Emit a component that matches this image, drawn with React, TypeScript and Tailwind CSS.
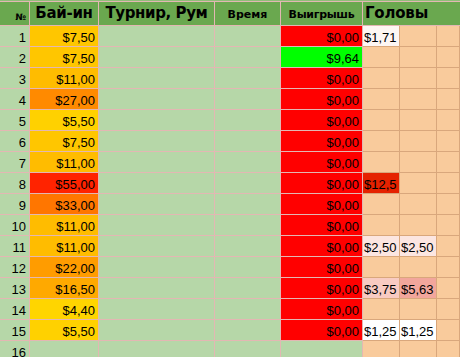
import React from "react";

type G = { t: string; c: string };
type Row = { n: number; buy?: string; bc?: string; win?: string; wc?: string; g?: (G | null)[] };

const rows: Row[] = [
  { n: 1, buy: "$7,50", bc: "bg-[#ffc600]", win: "$0,00", wc: "bg-[#ff0000]", g: [{ t: "$1,71", c: "bg-[#fdf6f3]" }] },
  { n: 2, buy: "$7,50", bc: "bg-[#ffc600]", win: "$9,64", wc: "bg-[#00ff00]" },
  { n: 3, buy: "$11,00", bc: "bg-[#ffbc00]", win: "$0,00", wc: "bg-[#ff0000]" },
  { n: 4, buy: "$27,00", bc: "bg-[#ff8a00]", win: "$0,00", wc: "bg-[#ff0000]" },
  { n: 5, buy: "$5,50", bc: "bg-[#ffd100]", win: "$0,00", wc: "bg-[#ff0000]" },
  { n: 6, buy: "$7,50", bc: "bg-[#ffc600]", win: "$0,00", wc: "bg-[#ff0000]" },
  { n: 7, buy: "$11,00", bc: "bg-[#ffbc00]", win: "$0,00", wc: "bg-[#ff0000]" },
  { n: 8, buy: "$55,00", bc: "bg-[#ff2300]", win: "$0,00", wc: "bg-[#ff0000]", g: [{ t: "$12,5", c: "bg-[#e52200]" }] },
  { n: 9, buy: "$33,00", bc: "bg-[#ff7600]", win: "$0,00", wc: "bg-[#ff0000]" },
  { n: 10, buy: "$11,00", bc: "bg-[#ffbc00]", win: "$0,00", wc: "bg-[#ff0000]" },
  { n: 11, buy: "$11,00", bc: "bg-[#ffbc00]", win: "$0,00", wc: "bg-[#ff0000]", g: [{ t: "$2,50", c: "bg-[#fce6e1]" }, { t: "$2,50", c: "bg-[#fce6e1]" }] },
  { n: 12, buy: "$22,00", bc: "bg-[#ff9c00]", win: "$0,00", wc: "bg-[#ff0000]" },
  { n: 13, buy: "$16,50", bc: "bg-[#ffa900]", win: "$0,00", wc: "bg-[#ff0000]", g: [{ t: "$3,75", c: "bg-[#f8cbc2]" }, { t: "$5,63", c: "bg-[#f2a69c]" }] },
  { n: 14, buy: "$4,40", bc: "bg-[#ffd500]", win: "$0,00", wc: "bg-[#ff0000]" },
  { n: 15, buy: "$5,50", bc: "bg-[#ffd100]", win: "$0,00", wc: "bg-[#ff0000]", g: [{ t: "$1,25", c: "bg-white" }, { t: "$1,25", c: "bg-white" }] },
  { n: 16 },
];

const pinkB = "border-r border-b border-[#e3b7b3]";
const tanB = "border-r border-b border-[#d9a77c]";
const num = "h-[21px] pt-[3px] leading-[17px] text-[13px] text-black whitespace-nowrap overflow-hidden";
const head = "font-['DejaVu_Sans',sans-serif] font-bold text-black";

export default function App() {
  return (
    <div className="w-[460px] h-[357px] overflow-hidden bg-[#b6d7a8] font-['Liberation_Sans',Arial,sans-serif]">
      <div className="h-[2px] bg-[#8fbf78] border-b border-[#e3b7b3]" />
      <div className="grid grid-cols-[30px_69px_116px_66px_82px_37px_37px_1fr]">
        {/* header */}
        <div className={`h-[24px] bg-[#6aa84f] ${pinkB} flex items-end justify-end pr-[3px] pb-[3px]`}>
          <span className={`${head} text-[9px] leading-none`}>№</span>
        </div>
        <div className={`h-[24px] bg-[#6aa84f] ${pinkB} flex items-center justify-center`}>
          <span className={`${head} text-[15px] leading-none tracking-[-0.3px]`}>Бай-ин</span>
        </div>
        <div className={`h-[24px] bg-[#6aa84f] ${pinkB} flex items-center justify-center`}>
          <span className={`${head} text-[15px] leading-none tracking-[-0.4px]`}>Турнир, Рум</span>
        </div>
        <div className={`h-[24px] bg-[#6aa84f] ${pinkB} flex items-center justify-center pt-[2px]`}>
          <span className={`${head} text-[11px] leading-none`}>Время</span>
        </div>
        <div className={`h-[24px] bg-[#6aa84f] ${pinkB} flex items-center justify-center pt-[2px]`}>
          <span className={`${head} text-[11px] leading-none tracking-[-0.3px]`}>Выигрышь</span>
        </div>
        <div className={`col-span-3 h-[24px] bg-[#6aa84f] border-b border-[#e3b7b3] flex items-center pl-[2px]`}>
          <span className={`${head} text-[15px] leading-none tracking-[-0.2px]`}>Головы</span>
        </div>

        {rows.map((r) => (
          <React.Fragment key={r.n}>
            <div className={`${num} ${pinkB} bg-[#b6d7a8] text-right pr-[3px]`}>{r.n}</div>
            <div className={`${num} ${pinkB} ${r.bc ?? "bg-[#b6d7a8]"} text-right pr-[3px]`}>{r.buy}</div>
            <div className={`${num} ${pinkB} bg-[#b6d7a8]`} />
            <div className={`${num} ${pinkB} bg-[#b6d7a8]`} />
            <div className={`${num} ${pinkB} ${r.wc ?? "bg-[#b6d7a8]"} text-right pr-[3px]`}>{r.win}</div>
            {[0, 1, 2].map((i) => {
              const g = r.g?.[i];
              return (
                <div key={i} className={`${num} ${tanB} ${g ? g.c : "bg-[#f9cb9c]"} pl-[1px]`}>
                  {g?.t}
                </div>
              );
            })}
          </React.Fragment>
        ))}
      </div>
    </div>
  );
}
